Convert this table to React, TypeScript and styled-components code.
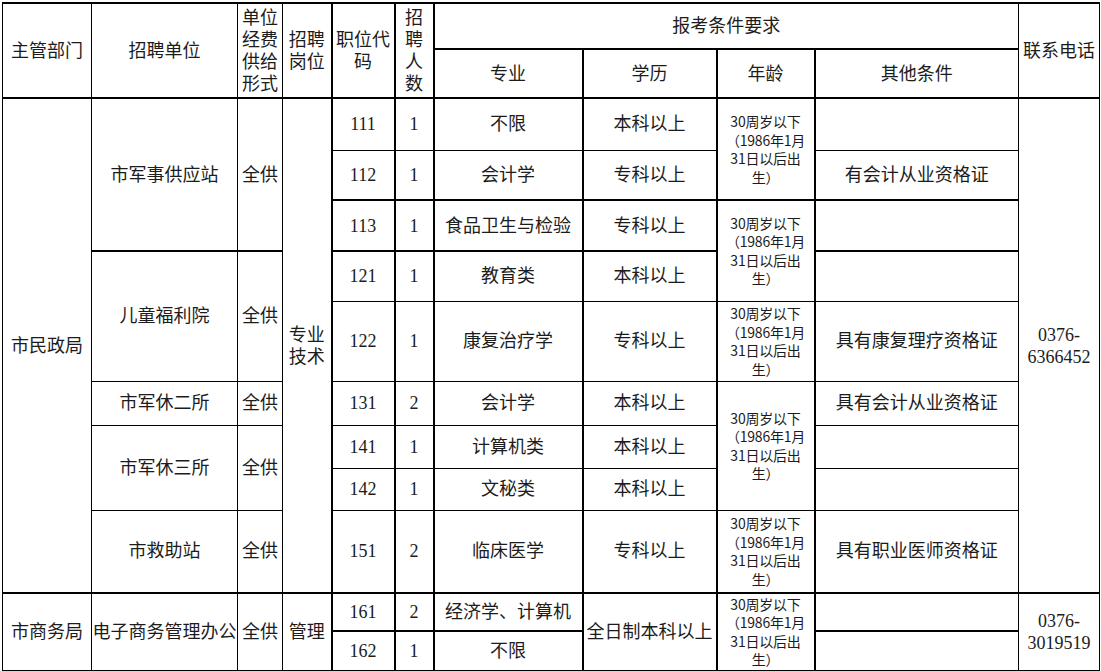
import styled, { createGlobalStyle } from "styled-components";

const GlobalStyle = createGlobalStyle`
    html, body {
        margin: 0;
        padding: 0;
        background: #fff;
    }
`;

const Page = styled.div`
    padding: 2px 0 0 2px;
`;

// Tabela principal, larguras fixas por coluna
const Table = styled.table`
    width: 1097px;
    table-layout: fixed;
    border-collapse: collapse;
    font-family: "Liberation Serif", "Noto Sans CJK SC", serif;
    font-size: 18px;
    color: #1c1c1c;
`;

const Row = styled.tr<{ $h: number }>`
    height: ${({ $h }) => $h}px;
`;

const Cell = styled.td<{ $tl?: boolean; $tt?: boolean; $nowrap?: boolean }>`
    border: 1px solid #000;
    ${({ $tl }) => ($tl ? "border-left: 2px solid #000;" : "")}
    ${({ $tt }) => ($tt ? "border-top: 2px solid #000;" : "")}
    padding: 0 3px;
    text-align: center;
    vertical-align: middle;
    line-height: 22px;
    white-space: ${({ $nowrap }) => ($nowrap ? "nowrap" : "normal")};
    ${({ $nowrap }) => ($nowrap ? "padding: 0;" : "")}
`;

const HeadCell = styled(Cell).attrs({ as: "th" })`
    font-weight: normal;
    padding: 0 2px;
    border-top-width: 2px;
`;

// Texto menor da coluna de idade
const AgeText = styled.div`
    font-family: "Noto Sans CJK SC", sans-serif;
    font-size: 14px;
    line-height: 18.5px;
    letter-spacing: -0.2px;
`;

const Age = ({ tl = true, tt, rows }: { tl?: boolean; tt?: boolean; rows?: number }) => (
    <Cell $tl={tl} $tt={tt} rowSpan={rows}>
        <AgeText>
            30周岁以下
            <br />
            （1986年1月
            <br />
            31日以后出
            <br />
            生）
        </AgeText>
    </Cell>
);

const cols = [89, 146, 45, 49, 63, 39, 149, 134, 98, 204, 81];

const App = () => {
    return (
        <Page>
            <GlobalStyle />
            <Table>
                <colgroup>
                    {cols.map((w, i) => (
                        <col key={i} style={{ width: w }} />
                    ))}
                </colgroup>
                <thead>
                    <Row $h={46}>
                        <HeadCell rowSpan={2}>主管部门</HeadCell>
                        <HeadCell rowSpan={2}>招聘单位</HeadCell>
                        <HeadCell rowSpan={2}>单位经费供给形式</HeadCell>
                        <HeadCell rowSpan={2}>招聘岗位</HeadCell>
                        <HeadCell rowSpan={2} $tl>职位代码</HeadCell>
                        <HeadCell rowSpan={2} $tl>招聘人数</HeadCell>
                        <HeadCell colSpan={4} $tl>报考条件要求</HeadCell>
                        <HeadCell rowSpan={2}>联系电话</HeadCell>
                    </Row>
                    <Row $h={49}>
                        <HeadCell $tl>专业</HeadCell>
                        <HeadCell $tl>学历</HeadCell>
                        <HeadCell $tl>年龄</HeadCell>
                        <HeadCell $tl>其他条件</HeadCell>
                    </Row>
                </thead>
                <tbody>
                    <Row $h={52}>
                        <Cell rowSpan={9} $tt>市民政局</Cell>
                        <Cell rowSpan={3} $tt>市军事供应站</Cell>
                        <Cell rowSpan={3} $tt>全供</Cell>
                        <Cell rowSpan={9} $tt>专业<br />技术</Cell>
                        <Cell $tl $tt>111</Cell>
                        <Cell $tl $tt>1</Cell>
                        <Cell $tl $tt>不限</Cell>
                        <Cell $tl $tt>本科以上</Cell>
                        <Age rows={2} tt />
                        <Cell $tl $tt></Cell>
                        <Cell rowSpan={9} $tt>0376-<br />6366452</Cell>
                    </Row>
                    <Row $h={50}>
                        <Cell $tl>112</Cell>
                        <Cell $tl>1</Cell>
                        <Cell $tl>会计学</Cell>
                        <Cell $tl>专科以上</Cell>
                        <Cell $tl>有会计从业资格证</Cell>
                    </Row>
                    <Row $h={51}>
                        <Cell $tl $tt>113</Cell>
                        <Cell $tl $tt>1</Cell>
                        <Cell $tl $tt $nowrap>食品卫生与检验</Cell>
                        <Cell $tl $tt>专科以上</Cell>
                        <Age rows={2} tt />
                        <Cell $tl $tt></Cell>
                    </Row>
                    <Row $h={50}>
                        <Cell rowSpan={2} $tt>儿童福利院</Cell>
                        <Cell rowSpan={2} $tt>全供</Cell>
                        <Cell $tl $tt>121</Cell>
                        <Cell $tl $tt>1</Cell>
                        <Cell $tl $tt>教育类</Cell>
                        <Cell $tl $tt>本科以上</Cell>
                        <Cell $tl $tt></Cell>
                    </Row>
                    <Row $h={80}>
                        <Cell $tl>122</Cell>
                        <Cell $tl>1</Cell>
                        <Cell $tl>康复治疗学</Cell>
                        <Cell $tl>专科以上</Cell>
                        <Age />
                        <Cell $tl>具有康复理疗资格证</Cell>
                    </Row>
                    <Row $h={44}>
                        <Cell>市军休二所</Cell>
                        <Cell>全供</Cell>
                        <Cell $tl>131</Cell>
                        <Cell $tl>2</Cell>
                        <Cell $tl>会计学</Cell>
                        <Cell $tl>本科以上</Cell>
                        <Age rows={3} />
                        <Cell $tl>具有会计从业资格证</Cell>
                    </Row>
                    <Row $h={43}>
                        <Cell rowSpan={2}>市军休三所</Cell>
                        <Cell rowSpan={2}>全供</Cell>
                        <Cell $tl>141</Cell>
                        <Cell $tl>1</Cell>
                        <Cell $tl>计算机类</Cell>
                        <Cell $tl>本科以上</Cell>
                        <Cell $tl></Cell>
                    </Row>
                    <Row $h={42}>
                        <Cell $tl>142</Cell>
                        <Cell $tl>1</Cell>
                        <Cell $tl>文秘类</Cell>
                        <Cell $tl>本科以上</Cell>
                        <Cell $tl></Cell>
                    </Row>
                    <Row $h={83}>
                        <Cell>市救助站</Cell>
                        <Cell>全供</Cell>
                        <Cell $tl>151</Cell>
                        <Cell $tl>2</Cell>
                        <Cell $tl>临床医学</Cell>
                        <Cell $tl>专科以上</Cell>
                        <Age />
                        <Cell $tl>具有职业医师资格证</Cell>
                    </Row>
                    <Row $h={38}>
                        <Cell rowSpan={2} $tt>市商务局</Cell>
                        <Cell rowSpan={2} $tt $nowrap>电子商务管理办公</Cell>
                        <Cell rowSpan={2} $tt>全供</Cell>
                        <Cell rowSpan={2} $tt>管理</Cell>
                        <Cell $tl $tt>161</Cell>
                        <Cell $tl $tt>2</Cell>
                        <Cell $tl $tt $nowrap>经济学、计算机</Cell>
                        <Cell $tl $tt rowSpan={2} $nowrap>全日制本科以上</Cell>
                        <Age rows={2} tt />
                        <Cell $tl $tt></Cell>
                        <Cell rowSpan={2} $tt>0376-<br />3019519</Cell>
                    </Row>
                    <Row $h={39}>
                        <Cell $tl $tt>162</Cell>
                        <Cell $tl $tt>1</Cell>
                        <Cell $tl $tt>不限</Cell>
                        <Cell $tl $tt></Cell>
                    </Row>
                </tbody>
            </Table>
        </Page>
    );
};

export default App;
